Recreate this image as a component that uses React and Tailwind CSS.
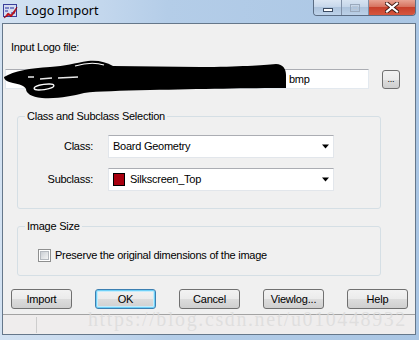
import React from 'react';

const btn =
  "flex h-[20px] w-[61px] items-center justify-center rounded-[3px] border border-[#707070] bg-[linear-gradient(180deg,#f2f2f2_0%,#ebebeb_50%,#dddddd_50%,#cfcfcf_100%)] text-[11px] leading-none tracking-[-0.2px] text-black";

function AppIcon() {
  return (
    <svg width="15" height="15" viewBox="0 0 15 15">
      <rect x="0.5" y="0.5" width="13" height="12" fill="#d6dcf0" stroke="#3a3f9a" />
      <path d="M2 3h4v2H2zM7 3h4v2H7zM2 6h3v2H2zM8 8h4v2H8z" fill="#7c86c8" />
      <path d="M1 14 L5 9 L8 11 L14 3 L12 8 L8 13 L6 11 Z" fill="#e0101a" stroke="#8a0008" strokeWidth="0.6" />
    </svg>
  );
}

function WinButtons() {
  return (
    <div className="flex h-[16px] self-start overflow-hidden rounded-b-[4px] border border-t-0 border-[#5b6d84]">
      <div className="flex w-[28px] items-center justify-center border-r border-[#7f8fa6] bg-[linear-gradient(180deg,#dbe6f3_0%,#c5d6ea_50%,#aec4dd_50%,#bed3ea_100%)]">
        <div className="mt-[4px] h-[4px] w-[10px] border border-[#3c4c63] bg-white" />
      </div>
      <div className="flex w-[27px] items-center justify-center border-r border-[#7f8fa6] bg-[linear-gradient(180deg,#d7e3f1_0%,#c3d4e8_50%,#adc3dc_50%,#bcd1e8_100%)]">
        <div className="h-[8px] w-[10px] border border-[#9aa9bc] bg-transparent p-[1px]">
          <div className="h-full w-full border border-[#b9c6d6]" />
        </div>
      </div>
      <div className="flex w-[46px] items-center justify-center bg-[linear-gradient(180deg,#e8a393_0%,#d7735f_45%,#c7402b_50%,#d6573f_100%)]">
        <svg width="14" height="11" viewBox="0 0 14 11">
          <path d="M2 1.5 L12 9.5 M12 1.5 L2 9.5" stroke="#3d1a14" strokeWidth="4" strokeLinecap="square" />
          <path d="M2 1.5 L12 9.5 M12 1.5 L2 9.5" stroke="#ffffff" strokeWidth="2.2" strokeLinecap="square" />
        </svg>
      </div>
    </div>
  );
}

function Combo({ children }) {
  return (
    <div className="flex h-[23px] w-[226px] items-center justify-between border border-[#e2e6eb] border-t-[#abadb3] bg-white pl-[4px] pr-[4px]">
      <div className="flex items-center gap-[5px]">{children}</div>
      <svg width="7" height="5" viewBox="0 0 7 5">
        <path d="M0 0.5H7L3.5 4.5Z" fill="#000" />
      </svg>
    </div>
  );
}

function Scribble() {
  return (
    <svg className="pointer-events-none absolute left-0 top-0" width="300" height="110" viewBox="0 0 300 110">
      <path
        d="M4,77 C14,71 30,68 50,67 C65,66 75,63 88,61 C98,60 106,62 113,66 L200,67 C240,67 262,65 276,64 C283,64 286,69 286,75 L286,88 C250,88 200,89 150,90 C120,91 98,91 84,93 C72,96 58,99 42,98 C31,97 26,93 26,89 C25,86 19,84 13,83 C8,82 4,80 4,77 Z"
        fill="#000"
      />
      <ellipse cx="44" cy="87" rx="10" ry="2.6" fill="none" stroke="#fff" strokeWidth="1.3" transform="rotate(-8 44 87)" />
      <path d="M28,77 L34,77 M40,79 L52,78 M58,78 L78,77" stroke="#e8e8e8" strokeWidth="1.4" />
      <path d="M75,66 C85,63 95,62 104,65" stroke="#fff" strokeWidth="1.1" fill="none" />
    </svg>
  );
}

export default function App() {
  return (
    <div className="relative flex h-[340px] w-[419px] flex-col overflow-hidden bg-[linear-gradient(90deg,#d3e2f2_0%,#c9dbef_18%,#b4cde8_40%,#aac6e4_100%)] font-['Liberation_Sans',Arial,sans-serif] text-black">
      {/* title bar */}
      <div className="flex h-[23px] shrink-0 items-center justify-between pl-[3px] pr-[3px]">
        <div className="flex items-center gap-[7px]">
          <AppIcon />
          <span className="font-['Noto_Sans',sans-serif] text-[12.5px] leading-none text-black">Logo Import</span>
        </div>
        <WinButtons />
      </div>

      {/* client area */}
      <div className="mb-[5px] ml-[2px] mr-[3px] flex flex-1 flex-col border border-[#65778a] bg-[#f0f0f0] tracking-[-0.25px]">
        <div className="ml-[8px] mt-[16px] h-[14px] text-[11px] leading-[14px]">Input Logo file:</div>

        <div className="ml-[2px] mt-[15px] flex items-start">
          <div className="flex h-[20px] w-[364px] items-center border border-[#e3e9ef] border-t-[#abadb3] bg-white">
            <span className="ml-[283px] text-[11px] leading-none">bmp</span>
          </div>
          <div className="ml-[13px] mt-[1px] flex h-[19px] w-[18px] items-end justify-center rounded-[3px] border border-[#707070] bg-[linear-gradient(180deg,#f2f2f2_0%,#ebebeb_50%,#dddddd_50%,#cfcfcf_100%)] pb-[4px] text-[9px] leading-none">
            ...
          </div>
        </div>

        <fieldset className="ml-[14px] mt-[21px] w-[364px] rounded-[3px] border border-[#d5dfe5] pb-[17px]">
          <legend className="ml-[7px] px-[2px] text-[11px] leading-[13px]">Class and Subclass Selection</legend>
          <div className="mt-[12px] flex flex-col gap-[10px]">
            <div className="flex items-center">
              <span className="w-[75px] text-right text-[11px] leading-none">Class:</span>
              <div className="ml-[15px]">
                <Combo>
                  <span className="text-[11px] leading-none">Board Geometry</span>
                </Combo>
              </div>
            </div>
            <div className="flex items-center">
              <span className="w-[75px] text-right text-[11px] leading-none">Subclass:</span>
              <div className="ml-[15px]">
                <Combo>
                  <div className="h-[13px] w-[12px] border border-black bg-[#a8000f]" />
                  <span className="text-[11px] leading-none">Silkscreen_Top</span>
                </Combo>
              </div>
            </div>
          </div>
        </fieldset>

        <fieldset className="ml-[14px] mt-[11px] w-[364px] rounded-[3px] border border-[#d5dfe5] pb-[13px]">
          <legend className="ml-[7px] px-[2px] text-[11px] leading-[13px]">Image Size</legend>
          <div className="ml-[20px] mt-[16px] flex items-center gap-[4px]">
            <div className="flex h-[13px] w-[13px] items-center justify-center border border-[#8e8f8f] bg-white">
              <div className="h-[9px] w-[9px] border border-[#b5b9bf] bg-[linear-gradient(135deg,#cbcfd5_0%,#f4f4f4_100%)]" />
            </div>
            <span className="text-[11px] leading-none">Preserve the original dimensions of the image</span>
          </div>
        </fieldset>

        <div className="mt-[13px] flex justify-between pl-[8px] pr-[7px]">
          <div className={btn}>Import</div>
          <div className="flex h-[20px] w-[61px] items-center justify-center rounded-[3px] border border-[#3c7fb1] bg-[linear-gradient(180deg,#f2f2f2_0%,#ebebeb_50%,#dddddd_50%,#cfcfcf_100%)] text-[11px] leading-none shadow-[inset_0_0_0_1px_#6fd0f7,inset_0_0_0_2px_#c5ecfb]">
            OK
          </div>
          <div className={btn}>Cancel</div>
          <div className={btn}>Viewlog...</div>
          <div className={btn}>Help</div>
        </div>

        <div className="mt-[5px] flex flex-1 border-t border-[#a3a3a3] bg-[#efeded]">
          <div className="ml-[33px] mt-[2px] mb-[1px] w-0 border-l border-[#cdcdcd]" />
        </div>
      </div>

      <Scribble />

      <span className="pointer-events-none absolute left-[88px] top-[307px] font-['Liberation_Serif',serif] text-[20px] leading-[24px] tracking-[1.6px] text-[#dadada]/75">
        https://blog.csdn.net/u010448932
      </span>
    </div>
  );
}
